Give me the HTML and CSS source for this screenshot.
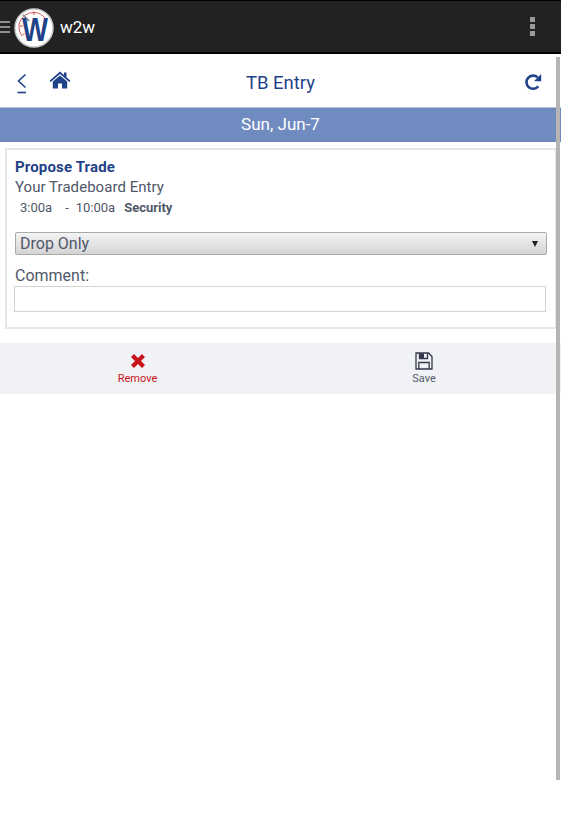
FILE: index.html
```html
<!DOCTYPE html>
<html>

<head>
    <title>TB Entry</title>
    <link rel="stylesheet" href="styles.css">
</head>

<body>
    <header class="app-bar">
        <div class="burger"><span></span><span></span><span></span></div>
        <svg class="logo" width="40" height="40" viewBox="0 0 40 40">
            <circle cx="20" cy="20" r="19" fill="#fff" stroke="#c9c9c9" stroke-width="1.5"/>
            <path d="M8 28 A14.5 14.5 0 1 1 31 10" fill="none" stroke="#cf4a4a" stroke-width="0.9"/>
            <path d="M20 3.5 V7 M6 18 H9 M8.5 27 L10.5 25.5" stroke="#cf4a4a" stroke-width="1"/>
            <path d="M9 7 L15 13" stroke="#8d8d98" stroke-width="2"/>
            <text x="8" y="33" textLength="26" lengthAdjust="spacingAndGlyphs" class="logo-w">W</text>
        </svg>
        <span class="app-name">w2w</span>
        <div class="dots"><span></span><span></span><span></span></div>
    </header>

    <nav class="nav-row">
        <div class="nav-left">
            <svg class="back" width="10" height="21" viewBox="0 0 10 21">
                <path d="M8.5 1.5 L1.5 8 L8.5 14.5" fill="none" stroke="#1f4288" stroke-width="1.6"/>
                <path d="M0.5 19.5 H9" stroke="#1f4288" stroke-width="1.6"/>
            </svg>
            <svg class="home" width="22" height="18" viewBox="0 0 22 18">
                <path d="M11 0.5 L15 4 V1.5 H17.5 V6.2 L21.5 9.7 L20.3 11 L11 2.9 L1.7 11 L0.5 9.7 Z" fill="#1f4288"/>
                <path d="M3.8 10.6 L11 4.4 L18.2 10.6 V17.5 H13 V12.5 H9 V17.5 H3.8 Z" fill="#1f4288"/>
            </svg>
        </div>
        <h1 class="page-title">TB Entry</h1>
        <svg class="refresh" width="18" height="18" viewBox="0 0 18 18">
            <path d="M14.3 13.2 A6.6 6.6 0 1 1 13.6 4.4" fill="none" stroke="#1f4288" stroke-width="2.6"/>
            <path d="M17.2 1 V8.2 H10 Z" fill="#1f4288"/>
        </svg>
    </nav>

    <div class="date-bar">Sun, Jun-7</div>

    <section class="card">
        <div class="card-title">Propose Trade</div>
        <div class="card-sub">Your Tradeboard Entry</div>
        <div class="shift">
            <span class="shift-start">3:00a</span>
            <span class="shift-dash">-</span>
            <span class="shift-end">10:00a</span>
            <span class="shift-name">Security</span>
        </div>
        <div class="select-box">
            <span>Drop Only</span>
            <span class="select-arrow"></span>
        </div>
        <label class="comment-label" for="comment">Comment:</label>
        <input class="comment-input" type="text" id="comment">
    </section>

    <div class="actions">
        <div class="action action-remove">
            <svg width="16" height="16" viewBox="0 0 16 16">
                <path d="M4 1 L8 5 L12 1 L15 4 L11 8 L15 12 L12 15 L8 11 L4 15 L1 12 L5 8 L1 4 Z" fill="#c8141c"/>
            </svg>
            <span>Remove</span>
        </div>
        <div class="action action-save">
            <svg width="18" height="18" viewBox="0 0 18 18">
                <path d="M1 1 H13.5 L17 4.5 V17 H1 Z" fill="none" stroke="#33384a" stroke-width="1.3"/>
                <path d="M4.5 1 V6.5 H12.5 V1" fill="none" stroke="#33384a" stroke-width="1.3"/>
                <rect x="5" y="1.5" width="4" height="4.5" fill="#33384a"/>
                <path d="M3.8 17 V10.5 H14.2 V17" fill="none" stroke="#33384a" stroke-width="1.3"/>
            </svg>
            <span>Save</span>
        </div>
    </div>

    <div class="scrollbar"></div>
</body>

</html>
```

FILE: styles.css
```css
html,
body {
    height: 100%;
    overflow: hidden;
}

body {
    font-family: Roboto, Arial, sans-serif;
    margin: 0;
    padding: 0;
    background-color: #fff;
    color: #50576a;
    position: relative;
}

/* Top bar */
.app-bar {
    height: 51px;
    display: flex;
    align-items: center;
    background-color: #222;
    border-top: 1px solid #000;
    border-bottom: 2px solid #000;
}

.burger {
    width: 10px;
    display: flex;
    flex-direction: column;
    gap: 3px;
}

.burger span {
    display: block;
    height: 2px;
    background-color: #8f8f8f;
}

.logo {
    margin-left: 4px;
    margin-top: 2px;
}

.logo-w {
    font-family: "Liberation Sans", Arial, sans-serif;
    font-size: 33px;
    font-weight: bold;
    fill: #1f4288;
}

.app-name {
    margin-left: 6px;
    font-size: 17px;
    color: #fff;
}

.dots {
    margin-left: auto;
    margin-right: 26px;
    display: flex;
    flex-direction: column;
    gap: 2px;
}

.dots span {
    display: block;
    width: 5px;
    height: 5px;
    background-color: #9a9a9a;
}

/* Nav row */
.nav-row {
    height: 53px;
    display: flex;
    align-items: center;
    position: relative;
    padding: 0 19px 0 17px;
}

.nav-left {
    display: flex;
    align-items: center;
    gap: 22px;
}

.back {
    margin-top: 5px;
}

.home {
    margin-top: -2px;
}

.page-title {
    flex: 1;
    margin: 4px 0 0;
    text-align: center;
    font-size: 18.5px;
    font-weight: normal;
    color: #1f4288;
    padding-right: 34px;
}

.refresh {
    margin-top: 2px;
}

/* Date bar */
.date-bar {
    height: 34px;
    line-height: 32px;
    text-align: center;
    font-size: 17px;
    color: #fff;
    background-color: #6f8bbf;
    border-top: 1px solid #b9c4da;
}

/* Card */
.card {
    margin: 6px 4px 0 5px;
    padding: 9px 9px 15px 8px;
    height: 153px;
    border: 2px solid #e6e6e6;
}

.card-title {
    font-size: 15px;
    font-weight: bold;
    line-height: 17px;
    letter-spacing: 0.15px;
    color: #1f4288;
}

.card-sub {
    font-size: 15px;
    line-height: 17px;
    letter-spacing: 0.05px;
    margin-top: 3px;
}

.shift {
    display: flex;
    font-size: 13px;
    line-height: 16px;
    margin-top: 4px;
    padding-left: 5px;
}

.shift-dash {
    margin-left: 13px;
}

.shift-end {
    margin-left: 7px;
}

.shift-name {
    margin-left: 9px;
    font-weight: bold;
}

.select-box {
    height: 21px;
    margin-top: 16px;
    margin-right: -1px;
    padding: 0 8px 0 4px;
    display: flex;
    align-items: center;
    justify-content: space-between;
    font-size: 16px;
    background: linear-gradient(#f4f4f4, #d4d4d4);
    border: 1px solid #a9a9a9;
    border-radius: 2px;
}

.select-arrow {
    width: 0;
    height: 0;
    border-left: 3px solid transparent;
    border-right: 3px solid transparent;
    border-top: 6px solid #222;
}

.comment-label {
    display: block;
    font-size: 16px;
    line-height: 18px;
    margin-top: 12px;
}

.comment-input {
    display: block;
    box-sizing: border-box;
    width: 532px;
    height: 26px;
    margin: 1px 0 0 -1px;
    padding: 0;
    background-color: #fff;
    border: 1px solid #d4d4d4;
    border-radius: 0;
}

/* Bottom actions */
.actions {
    height: 51px;
    margin-top: 14px;
    display: flex;
    background-color: #f1f2f6;
    box-sizing: border-box;
    padding-top: 9px;
}

.action {
    flex: none;
    display: flex;
    flex-direction: column;
    align-items: center;
    font-size: 11px;
    line-height: 12px;
    gap: 3px;
}

.action-remove {
    width: 275px;
    color: #c8141c;
}

.action-save {
    width: 298px;
    color: #555b6b;
}

.action-remove svg {
    margin-top: 1px;
    margin-bottom: 1px;
}

/* Overlay scrollbar */
.scrollbar {
    position: absolute;
    top: 57px;
    left: 556px;
    width: 4px;
    height: 723px;
    background-color: #b5b5b5;
}
```
